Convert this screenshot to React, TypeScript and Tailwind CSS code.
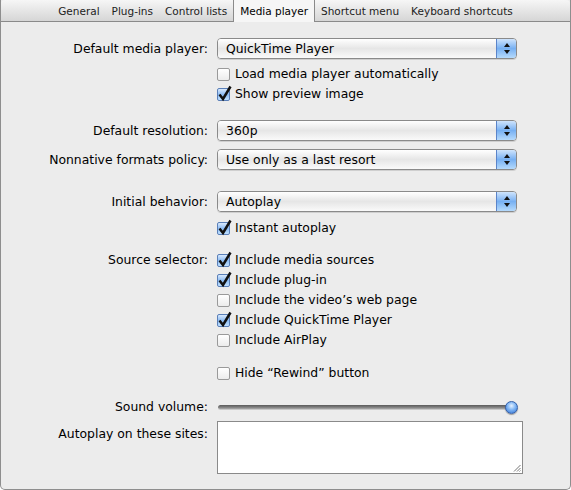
import React from 'react';

const tabs = ['General', 'Plug-ins', 'Control lists', 'Media player', 'Shortcut menu', 'Keyboard shortcuts'];

const Check: React.FC<{ checked?: boolean }> = ({ checked }) => (
  <span className="relative block w-[13px] h-[13px] shrink-0">
    <span
      className={
        checked
          ? 'block w-[13px] h-[13px] rounded-[2px] border border-[#5a7fb8] bg-gradient-to-b from-[#d9e9fc] via-[#8dbcf3] to-[#bfe0ff]'
          : 'block w-[13px] h-[13px] rounded-[2px] border border-[#9a9a9a] bg-gradient-to-b from-[#ffffff] to-[#ececec]'
      }
    />
    {checked && (
      <svg className="absolute left-[1px] top-[-3px] overflow-visible" width="14" height="16" viewBox="0 0 14 16">
        <path d="M1.5 9.5 L5 14 L12.5 1.5" fill="none" stroke="#111" strokeWidth="2.5" strokeLinejoin="miter" />
      </svg>
    )}
  </span>
);

const CheckRow: React.FC<{ label: string; checked?: boolean; className?: string }> = ({ label, checked, className }) => (
  <div className={`flex items-center h-[20px] gap-[5px] ${className ?? ''}`}>
    <Check checked={checked} />
    <span>{label}</span>
  </div>
);

const Select: React.FC<{ value: string }> = ({ value }) => (
  <div className="flex h-[21px] w-[300px] rounded-[4px] border border-[#8a8a8a] overflow-hidden shadow-[0_1px_0_rgba(0,0,0,0.12)]">
    <div className="flex-1 flex items-center pl-[8px] bg-gradient-to-b from-[#ffffff] via-[#e6e6e6] to-[#fafafa]">{value}</div>
    <div className="w-[20px] flex flex-col items-center justify-center gap-[3px] border-l border-[#5b84c9] bg-gradient-to-b from-[#cfe4fc] via-[#77b0f2] to-[#b5dafc]">
      <svg width="6" height="4" viewBox="0 0 6 4"><path d="M3 0 L6 4 L0 4 Z" fill="#111" /></svg>
      <svg width="6" height="4" viewBox="0 0 6 4"><path d="M0 0 L6 0 L3 4 Z" fill="#111" /></svg>
    </div>
  </div>
);

const Label: React.FC<{ children: React.ReactNode; top?: boolean }> = ({ children, top }) => (
  <div className={`w-[208px] shrink-0 text-right pr-[1px] ${top ? 'self-start pt-[5px]' : ''}`}>{children}</div>
);

export default function App() {
  return (
    <div
      className="w-[571px] h-[490px] flex flex-col bg-[#ececec] border-x border-b border-[#8e8e8e] rounded-b-[5px] text-[12.4px] text-black leading-[16px]"
      style={{ fontFamily: '"DejaVu Sans", "Liberation Sans", sans-serif' }}
    >
      <div className="h-[22px] shrink-0 flex justify-center border-b border-[#8a8a8a] rounded-t-[4px] bg-gradient-to-b from-[#f6f6f6] to-[#d6d6d6] text-[10.5px]">
        {tabs.map((t) =>
          t === 'Media player' ? (
            <div key={t} className="px-[6px] flex items-center bg-[#f6f6f6] border-x border-[#8a8a8a] h-[22px]">
              {t}
            </div>
          ) : (
            <div key={t} className="px-[6px] flex items-center text-[#222]">
              {t}
            </div>
          )
        )}
      </div>

      <div className="flex items-center mt-[16px] gap-[8px]">
        <Label>Default media player:</Label>
        <Select value="QuickTime Player" />
      </div>
      <div className="pl-[216px] mt-[5px]">
        <CheckRow label="Load media player automatically" />
        <CheckRow label="Show preview image" checked />
      </div>

      <div className="flex items-center mt-[16px] gap-[8px]">
        <Label>Default resolution:</Label>
        <Select value="360p" />
      </div>
      <div className="flex items-center mt-[8px] gap-[8px]">
        <Label>Nonnative formats policy:</Label>
        <Select value="Use only as a last resort" />
      </div>

      <div className="flex items-center mt-[21px] gap-[8px]">
        <Label>Initial behavior:</Label>
        <Select value="Autoplay" />
      </div>
      <div className="pl-[216px] mt-[6px]">
        <CheckRow label="Instant autoplay" checked />
      </div>

      <div className="flex mt-[12px] gap-[8px]">
        <Label top>
          <span className="block -mt-[3px]">Source selector:</span>
        </Label>
        <div>
          <CheckRow label="Include media sources" checked />
          <CheckRow label="Include plug-in" checked />
          <CheckRow label="Include the video’s web page" />
          <CheckRow label="Include QuickTime Player" checked />
          <CheckRow label="Include AirPlay" />
          <CheckRow label="Hide “Rewind” button" className="mt-[13px]" />
        </div>
      </div>

      <div className="flex items-center mt-[14px] h-[20px] gap-[9px]">
        <Label>Sound volume:</Label>
        <div className="relative w-[300px] h-[20px] flex items-center">
          <div className="w-[292px] h-[5px] rounded-full bg-gradient-to-b from-[#5a5a5a] via-[#7a7a7a] to-[#a8a8a8] border-b border-[#c8c8c8]" />
          <div className="absolute left-[287px] top-[4px] w-[13px] h-[13px] rounded-full border border-[#3560a8] bg-[radial-gradient(circle_at_50%_35%,#e4f1ff_0%,#7fb5f4_45%,#2f6fd0_100%)] shadow-[0_1px_1px_rgba(0,0,0,0.35)]" />
        </div>
      </div>

      <div className="flex mt-[4px] gap-[8px]">
        <Label top>Autoplay on these sites:</Label>
        <div className="relative w-[306px] h-[53px] bg-white border border-[#8a8a8a]">
          <svg className="absolute right-[1px] bottom-[1px]" width="8" height="8" viewBox="0 0 8 8">
            <path d="M7.5 1 L1 7.5 M7.5 4 L4 7.5 M7.5 6.5 L6.5 7.5" stroke="#777" strokeWidth="1" />
          </svg>
        </div>
      </div>
    </div>
  );
}
